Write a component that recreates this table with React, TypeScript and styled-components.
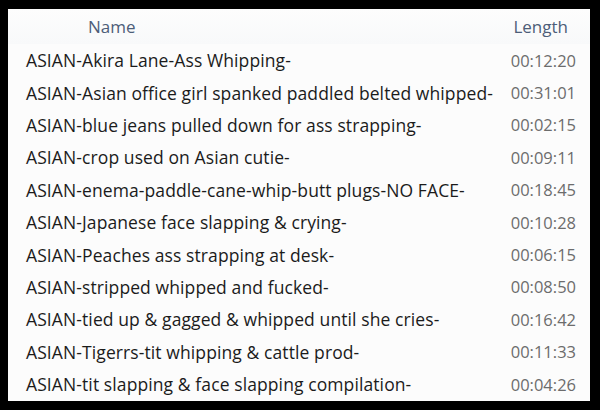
import React from "react";
import styled, { createGlobalStyle } from "styled-components";

const Global = createGlobalStyle`
  html, body { background: #000; }
  body { margin: 9px 10px 9px 8px; font-family: "Open Sans", "Noto Sans", sans-serif; }
`;

const Panel = styled.div`
  width: 582px;
  height: 392px;
  background: #fcfcfc;
  display: flex;
  flex-direction: column;
  overflow: hidden;
`;

const Header = styled.div`
  height: 35px;
  display: flex;
  align-items: center;
  justify-content: space-between;
  padding: 0 22px 0 80px;
  background: linear-gradient(#fdfdfd, #f8f9fa);
  color: #4d5d78;
  font-size: 17px;
`;

const Row = styled.div`
  height: 32.4px;
  display: flex;
  align-items: center;
  justify-content: space-between;
  padding: 0 14px 0 18px;
  font-size: 17.5px;
`;

const Name = styled.span`
  color: #1b1b1b;
  white-space: nowrap;
  letter-spacing: 0.1px;
`;

const Len = styled.span`
  color: #6c6c6c;
  font-size: 16.5px;
`;

const rows: [string, string][] = [
  ["ASIAN-Akira Lane-Ass Whipping-", "00:12:20"],
  ["ASIAN-Asian office girl spanked paddled belted whipped-", "00:31:01"],
  ["ASIAN-blue jeans pulled down for ass strapping-", "00:02:15"],
  ["ASIAN-crop used on Asian cutie-", "00:09:11"],
  ["ASIAN-enema-paddle-cane-whip-butt plugs-NO FACE-", "00:18:45"],
  ["ASIAN-Japanese face slapping & crying-", "00:10:28"],
  ["ASIAN-Peaches ass strapping at desk-", "00:06:15"],
  ["ASIAN-stripped whipped and fucked-", "00:08:50"],
  ["ASIAN-tied up & gagged & whipped until she cries-", "00:16:42"],
  ["ASIAN-Tigerrs-tit whipping & cattle prod-", "00:11:33"],
  ["ASIAN-tit slapping & face slapping compilation-", "00:04:26"],
];

export default function App() {
  return (
    <>
      <Global />
      <Panel>
        <Header>
          <span>Name</span>
          <span>Length</span>
        </Header>
        {rows.map(([n, l]) => (
          <Row key={n}>
            <Name>{n}</Name>
            <Len>{l}</Len>
          </Row>
        ))}
      </Panel>
    </>
  );
}
